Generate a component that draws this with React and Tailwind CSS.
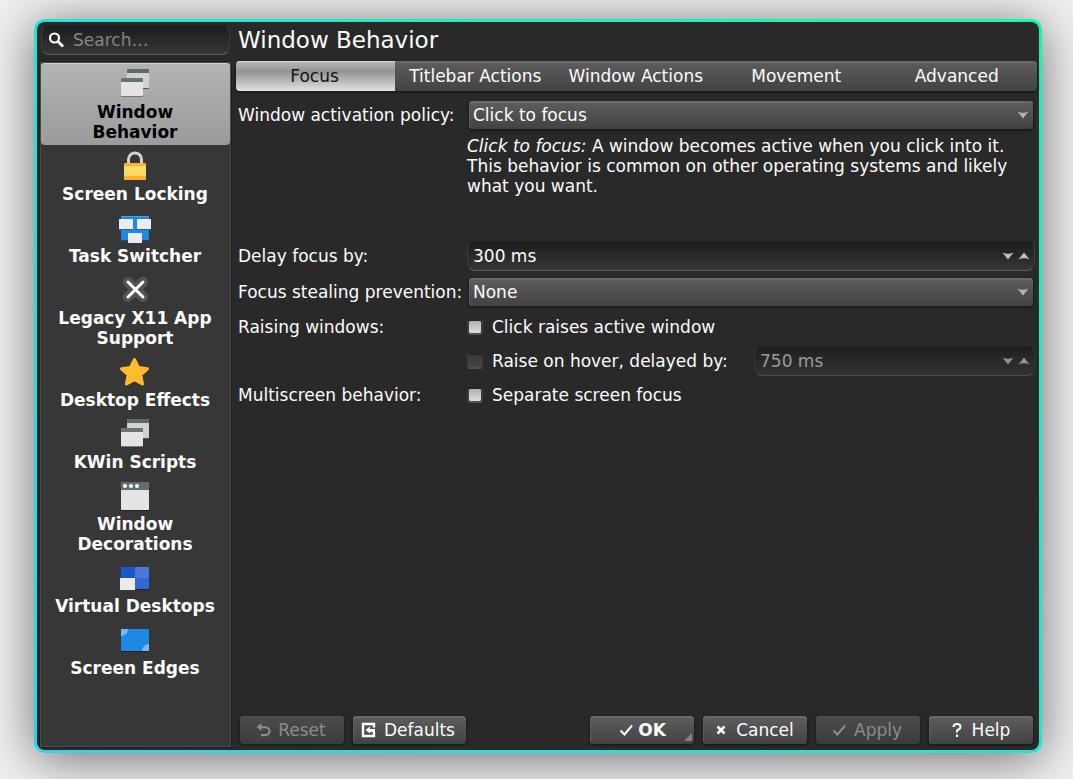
import React, { useState } from "react";

const raised =
  "bg-linear-to-b from-[#5e5e5e] to-[#424242] shadow-[inset_0_2px_0_#6a6a6a,inset_1px_0_0_#5e5e5e,0_1px_2px_1px_#1c1c1c]";
const sunken =
  "rounded-lg border border-t-[#1f1f1f] border-x-[#3c3c3c] border-b-[#5a5a5a] bg-linear-to-b from-[#1b1b1b] via-[#2a2a2a] to-[#363636]";

function WindowsIcon() {
  return (
    <>
      <rect x="8" y="3" width="22" height="19" rx="1" fill="#555" />
      <rect x="8" y="2" width="22" height="19" rx="1" fill="#d2d2d2" />
      <path d="M8 6V3q0-1 1-1h20q1 0 1 1v3z" fill="#5f696d" />
      <rect x="2" y="12" width="22" height="18" rx="1" fill="#777" />
      <rect x="2" y="11" width="22" height="18" rx="1" fill="#e4e4e4" />
      <path d="M2 15v-3q0-1 1-1h20q1 0 1 1v3z" fill="#687474" />
    </>
  );
}

function LockIcon() {
  return (
    <>
      <path d="M9.500 15v-4.500a6.500 6.500 0 0 1 13 0V15" fill="none" stroke="#d2d2d2" strokeWidth="3" />
      <rect x="5" y="14" width="22" height="17" rx="1" fill="#ffb133" />
      <rect x="5" y="17" width="22" height="10" fill="#fed968" />
    </>
  );
}

function SwitcherIcon() {
  return (
    <>
      <rect x="2" y="6" width="28" height="24" rx="1" fill="#174f82" />
      <rect x="2" y="5" width="28" height="24" rx="1" fill="#1e88e5" />
      <rect x="2" y="5" width="28" height="1" fill="#4b9fea" />
      <rect x="0" y="9" width="14" height="10" fill="#1768b0" />
      <rect x="18" y="9" width="14" height="10" fill="#1768b0" />
      <rect x="0" y="8" width="14" height="10" fill="#ebebeb" />
      <rect x="18" y="8" width="14" height="10" fill="#ebebeb" />
      <rect x="9" y="22" width="14" height="10" fill="#ebebeb" />
    </>
  );
}

function XIcon() {
  return (
    <g fill="none" strokeLinecap="round">
      <path d="M9 9.500l15 15m0-15l-15 15" stroke="#2b2b2b" strokeWidth="10" />
      <path d="M9 9l15 15m0-15l-15 15" stroke="#666" strokeWidth="10" />
      <path d="M9 9l15 15m0-15l-15 15" stroke="#525252" strokeWidth="9" />
      <path d="M9 9l15 15m0-15l-15 15" stroke="#fff" strokeWidth="3" />
    </g>
  );
}

function StarIcon() {
  return (
    <path
      d="M15.500 4.500l4 8 9 1.300-6.700 6 1.700 9.200-8-4.300-8 4.300 1.700-9.200-6.700-6 9-1.300z"
      fill="#ffbb2d"
      stroke="#ffbb2d"
      strokeWidth="3"
      strokeLinejoin="round"
    />
  );
}

function DecorationIcon() {
  return (
    <>
      <rect x="2" y="4" width="28" height="28" rx="1" fill="#222" />
      <rect x="2" y="3" width="28" height="28" rx="1" fill="#e4e4e4" />
      <path d="M2 11V4q0-1 1-1h26q1 0 1 1v7z" fill="#616d72" />
      <circle cx="6" cy="7" r="2" fill="#fff" />
      <circle cx="12" cy="7" r="2" fill="#fff" />
      <circle cx="18" cy="7" r="2" fill="#fff" />
    </>
  );
}

function DesktopsIcon() {
  return (
    <>
      <rect x="2" y="7" width="28" height="22" rx="1" fill="#222" />
      <rect x="2" y="6" width="28" height="22" rx="1" fill="#3367d6" />
      <path d="M2 17V7q0-1 1-1h13v11z" fill="#1a57cd" />
      <path d="M16 6h13q1 0 1 1v10H16z" fill="#4a79db" />
      <rect x="1" y="17" width="15" height="12" fill="#ebebeb" />
    </>
  );
}

function EdgesIcon() {
  return (
    <>
      <rect x="2" y="7" width="28" height="22" rx="1" fill="#222" />
      <rect x="2" y="6" width="28" height="22" rx="1" fill="#1e88e5" />
      <path d="M2 13a7 7 0 0 0 7-7H2z" fill="#78b8f0" />
      <path d="M30 21a7 7 0 0 0-7 7h7z" fill="#78b8f0" />
    </>
  );
}

const sections = [
  ["Window Behavior", WindowsIcon],
  ["Screen Locking", LockIcon],
  ["Task Switcher", SwitcherIcon],
  ["Legacy X11 App Support", XIcon],
  ["Desktop Effects", StarIcon],
  ["KWin Scripts", WindowsIcon],
  ["Window Decorations", DecorationIcon],
  ["Virtual Desktops", DesktopsIcon],
  ["Screen Edges", EdgesIcon],
];

const tabs = ["Focus", "Titlebar Actions", "Window Actions", "Movement", "Advanced"];

function Arrow({ up }) {
  return (
    <svg viewBox="0 0 12 8" className="h-2 w-3" aria-hidden="true">
      <path d={up ? "M.5 7.500L6 .5l5.500 7Q6 5 .5 7.500z" : "M.5.5L6 7.500 11.500.5Q6 3 .5.5z"} fill="currentColor" />
    </svg>
  );
}

function Select({ id, options }) {
  return (
    <div className="relative px-0.5 py-px">
      <select id={id} className={`h-7 w-full appearance-none rounded px-1 text-[#fcfcfc] ${raised}`}>
        {options.map((o) => (
          <option key={o} className="bg-[#373737]">{o}</option>
        ))}
      </select>
      <span className="pointer-events-none absolute inset-y-0 right-1.5 flex items-center text-[#b4b4b4]">
        <Arrow />
      </span>
    </div>
  );
}

function Spin({ id, label, start, step, disabled }) {
  const [value, setValue] = useState(start);
  return (
    <div className={`flex h-[30px] items-center pr-1 pl-[5px] ${sunken} ${disabled ? "opacity-70" : ""}`}>
      <input
        id={id}
        aria-label={label}
        disabled={disabled}
        readOnly
        value={`${value} ms`}
        className={`w-full min-w-0 flex-1 bg-transparent outline-none ${disabled ? "text-[#c8c8c8]" : "text-[#fcfcfc]"}`}
      />
      <div className="flex gap-1 text-[#c0c0c0]">
        <button type="button" aria-label="Decrease" disabled={disabled} onClick={() => setValue(Math.max(0, value - step))}>
          <Arrow />
        </button>
        <button type="button" aria-label="Increase" disabled={disabled} onClick={() => setValue(value + step)}>
          <Arrow up />
        </button>
      </div>
    </div>
  );
}

function Check({ children, checked }) {
  return (
    <label className="flex h-[30px] items-center gap-[9px] whitespace-nowrap">
      <input
        type="checkbox"
        defaultChecked={checked}
        className="h-4 w-4 appearance-none rounded-[3px] border-2 border-t-[#242424] border-x-[#3c3c3c] border-b-[#505050] bg-linear-to-b from-[#363636] to-[#484848] bg-origin-border checked:from-[#a8a8a8] checked:to-[#e6e6e6] checked:bg-clip-padding"
      />
      {children}
    </label>
  );
}

function Button({ children, icon, disabled, bold, className = "w-[104px]" }) {
  return (
    <button
      type="button"
      disabled={disabled}
      className={`relative flex h-7 items-center justify-center rounded ${raised} ${className} ${bold ? "gap-1 font-bold" : "gap-[7px] pr-[3px]"} disabled:from-[#4b4b4b] disabled:to-[#3c3c3c] disabled:text-[#8c8c8c] disabled:shadow-[inset_0_1px_0_#525252,0_1px_2px_1px_#202020]`}
    >
      <svg viewBox="0 0 16 16" className="h-4 w-4 shrink-0" fill="none" stroke="currentColor" strokeWidth="2" aria-hidden="true">
        {icon}
      </svg>
      {children}
    </button>
  );
}

const check = <path d="M2.500 8.500l4 4 7.500-9" />;

export default function App() {
  const [section, setSection] = useState("Window Behavior");
  const [tab, setTab] = useState("Focus");
  return (
    <div className="flex min-h-screen overflow-hidden bg-[#f0f0f0] pt-[19px] pr-[31px] pb-[26px] pl-[34px] font-['DejaVu_Sans',sans-serif] text-[17px] leading-5 text-[#fcfcfc]">
      <div className="flex flex-1 rounded-[10px] bg-linear-to-tr from-[#31d2ea] to-[#18f5b1] p-[3px] shadow-[0_6px_50px_rgba(0,0,0,0.55)]">
        <div className="flex flex-1 rounded-lg bg-[#292929] px-0.5">
          <aside className="flex w-[193px] shrink-0 flex-col pt-[3px] pb-0.5">
            <div className={`mx-0.5 mb-1.5 flex h-[30px] items-center gap-2 pl-[7px] ${sunken}`}>
              <svg viewBox="0 0 16 16" className="h-4 w-4 shrink-0" fill="none" stroke="#fff" aria-hidden="true">
                <circle cx="5.500" cy="6" r="4.500" strokeWidth="2.200" />
                <path d="M8.500 9l5.500 5.500" strokeWidth="2.800" />
              </svg>
              <input
                aria-label="Search"
                placeholder="Search…"
                className="w-full min-w-0 bg-transparent outline-none placeholder:text-[#858585] placeholder:opacity-100"
              />
            </div>
            <nav aria-label="Sections" className="flex-1 border border-[#202020] bg-[#373737] p-px shadow-[inset_0_0_0_1px_#4a4a4a]">
              {sections.map(([name, Icon]) => (
                <button
                  key={name}
                  type="button"
                  onClick={() => setSection(name)}
                  aria-current={section === name ? "page" : undefined}
                  className={`flex w-full flex-col items-center gap-[3px] rounded pt-1 pr-[13px] pb-[3px] pl-3 text-center font-bold ${
                    section === name
                      ? "bg-linear-to-b from-[#b3b3b3] to-[#9b9b9b] text-black shadow-[inset_0_1px_0_#cfcfcf]"
                      : ""
                  }`}
                >
                  <svg viewBox="0 0 32 32" className="h-8 w-8" aria-hidden="true">
                    <Icon />
                  </svg>
                  {name}
                </button>
              ))}
            </nav>
          </aside>

          <main className="ml-1 flex min-w-0 flex-1 flex-col">
            <h1 className="px-0.5 pt-1 pb-[7px] text-[23px] leading-7">Window Behavior</h1>
            <div role="tablist" className={`flex overflow-hidden rounded ${raised}`}>
              {tabs.map((name) => (
                <button
                  key={name}
                  type="button"
                  role="tab"
                  aria-selected={tab === name}
                  onClick={() => setTab(name)}
                  className={`h-[30px] flex-1 basis-0 whitespace-nowrap first:pr-0.5 first:grow-0 first:basis-[159px] ${
                    tab === name
                      ? "bg-linear-to-b from-[#bababa] via-[#949494] via-35% to-[#e2e2e2] text-[#141414] shadow-[inset_0_1px_0_#d2d2d2]"
                      : ""
                  }`}
                >
                  {name}
                </button>
              ))}
            </div>

            <div className="grid grid-cols-[229px_1fr] pt-[9px] pr-0.5 pl-0.5">
              <label htmlFor="policy" className="leading-[30px]">Window activation policy:</label>
              <div className="mb-[45px]">
                <Select id="policy" options={["Click to focus", "Focus follows mouse"]} />
                <p className="pt-1.5">
                  <i>Click to focus:</i> A window becomes active when you click into it. This behavior is common on other operating systems and likely what you want.
                </p>
              </div>
              <label htmlFor="delay" className="leading-[30px]">Delay focus by:</label>
              <div className="mb-1.5">
                <Spin id="delay" start={300} step={10} />
              </div>
              <label htmlFor="stealing" className="leading-[30px]">Focus stealing prevention:</label>
              <Select id="stealing" options={["None", "Low", "Medium", "High"]} />
              <span className="mt-[5px] leading-[30px]">Raising windows:</span>
              <div className="mt-[5px] mb-1 flex flex-col gap-1">
                <Check checked>Click raises active window</Check>
                <div className="flex justify-between">
                  <Check>Raise on hover, delayed by:</Check>
                  <div className="w-[281px]">
                    <Spin label="Raise delay" start={750} step={10} disabled />
                  </div>
                </div>
              </div>
              <span className="leading-[30px]">Multiscreen behavior:</span>
              <Check checked>Separate screen focus</Check>
            </div>

            <footer className="mt-auto flex gap-[9px] pr-1 pb-1.5 pl-1">
              <Button disabled icon={<path d="M6.500 1L1.500 5l5 4V6.200H10.500a2.900 2.900 0 0 1 0 5.800H6v2.200h4.500a5 5 0 0 0 0-10H6.500z" fill="currentColor" stroke="none" />}>
                Reset
              </Button>
              <Button
                className="w-[113px]"
                icon={
                  <>
                    <path d="M13 5.500V2H2v12h11V10" strokeWidth="2.400" />
                    <path d="M4.500 8l4.500-3.500V7h5v3H9v1.500z" fill="currentColor" stroke="none" />
                  </>
                }
              >
                Defaults
              </Button>
              <div className="flex-1" />
              <Button bold icon={check}>
                OK
                <svg viewBox="0 0 8 8" className="absolute right-0.5 bottom-[3px] h-2 w-2" aria-hidden="true">
                  <path d="M8 0v8H0z" fill="#828282" />
                </svg>
              </Button>
              <Button icon={<path d="M4.500 4.500l7 7m0-7l-7 7" strokeWidth="2.500" />}>Cancel</Button>
              <Button disabled icon={check}>Apply</Button>
              <Button icon={<path d="M4.500 5q0-3 3.500-3t3.500 3q0 1.500-2 2.500T8 10.500M8 12.500v2.500" />}>Help</Button>
            </footer>
          </main>
        </div>
      </div>
    </div>
  );
}
